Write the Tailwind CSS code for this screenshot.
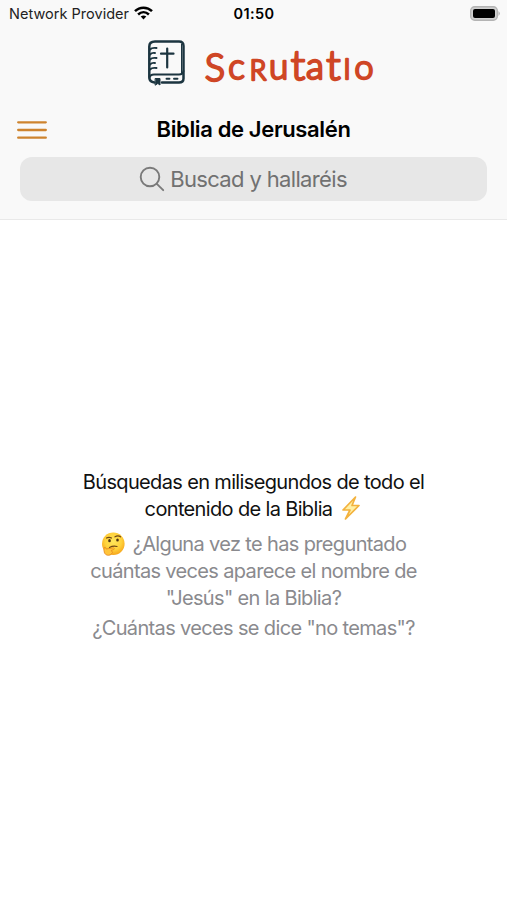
<!DOCTYPE html>
<html lang="es">
<head>
<meta charset="utf-8">
<title>Scrutatio</title>
<script src="https://cdn.jsdelivr.net/npm/@tailwindcss/browser@4"></script>
</head>
<body class="bg-white">
<div class="w-[507px] h-[900px] flex flex-col overflow-hidden bg-white font-['Inter','Liberation_Sans',sans-serif] text-black">
  <header class="h-[220px] shrink-0 bg-[#f9f9f9] border-b border-[#e9e9e9] flex flex-col">
    <div class="h-7 grid grid-cols-3 items-center pl-[9px] pr-[7px] text-[14.5px] leading-7">
      <div class="flex items-center gap-[5px] text-[#222]">
        <span class="whitespace-nowrap tracking-[0.02px]">Network Provider</span>
        <svg class="shrink-0 -mt-[2px]" width="19" height="14" viewBox="0 0 19 14" fill="none" stroke="#000" stroke-width="2.5"><path d="M1 5.2C5.7.6 13.300.6 18 5.200"/><path d="M4.100 8.500C7.300 5.500 11.700 5.500 14.900 8.500"/><path d="M6.700 10.600Q9.500 8.400 12.300 10.600L9.500 13.500Z" fill="#000" stroke="none"/></svg>
      </div>
      <div class="text-center font-semibold tracking-[0.4px] -ml-[1px]">01:50</div>
      <svg class="justify-self-end -mt-[2px]" width="30" height="15" viewBox="0 0 30 15"><rect x=".7" y=".7" width="26.600" height="13.600" rx="4" fill="#d0d0d0" stroke="#b4b4b4" stroke-width="1.400"/><rect x="3" y="3" width="22" height="9" rx="2" fill="#000"/><path d="M28.500 5Q31 7.500 28.500 10Z" fill="#aaa"/></svg>
    </div>
    <div class="h-[76px] flex items-start pl-[147px] pt-3">
      <svg width="39" height="46" viewBox="0 0 39 46" fill="none" stroke="#1c3540" stroke-width="2.500" stroke-linecap="round" stroke-linejoin="round"><path d="M8 1.500H32Q36.500 1.500 36.500 6V38.500Q36.500 42.500 32 42.500H15M7.500 42.500Q2.300 42 2.300 37V6.500Q2.300 1.500 8 1.500"/><path d="M2.300 38Q3 34.500 7 34.500H32Q36 34.500 36.500 31" stroke-width="1.800"/><path d="M34.500 4V33" stroke-width="1"/><path d="M3 9.500Q5 7.300 9.500 8M3 14.500Q5 12.300 8 13M3 19.500Q5 17.300 9.500 18M3 24.500Q5 22.300 8 23M3 29.500Q5 27.300 9.500 28" stroke-width="1.900"/><path d="M20.200 8.500V27.500M14 13.700H26.500" stroke-width="2.200"/><path d="M19.500 38.700H22.500M27 38.700H30.500" stroke-width="1.900"/><path d="M8.500 38.500H13V45L10.800 43.500L8.500 45Z" fill="#1c3540" stroke-width="1"/></svg>
      <svg class="ml-[14px]" width="180" height="50" viewBox="200 40 180 50" fill="#cf4625" stroke="#cf4625" stroke-width="2.400" stroke-linejoin="round" stroke-linecap="round" font-family="Lato, sans-serif" text-anchor="middle">
        <text font-weight="300" font-size="35"><tspan x="215" y="81" font-size="38">S</tspan><tspan x="236.500" y="78.500" font-size="35">c</tspan><tspan x="258" y="79.500" font-size="27">R</tspan><tspan x="278.500" y="78.500" font-size="35">u</tspan><tspan x="298" y="79.500" font-size="42">t</tspan><tspan x="315" y="79" font-size="37">a</tspan><tspan x="333.500" y="79.500" font-size="42">t</tspan><tspan x="347" y="78.500" font-size="27">I</tspan><tspan x="364" y="78.500" font-size="34">o</tspan></text>
      </svg>
    </div>
    <div class="h-[53px] grid grid-cols-[1fr_auto_1fr] items-center px-[17px] pb-[2px]">
      <svg width="30" height="20" viewBox="0 0 30 20" stroke="#ce842f" stroke-width="2.300" stroke-linecap="round"><path d="M1.200 2.300H28.800M1.200 10H28.800M1.200 17.700H28.800"/></svg>
      <h1 class="text-[22px] font-semibold tracking-[-0.36px] whitespace-nowrap">Biblia de Jerusalén</h1>
    </div>
    <div class="mx-5 h-11 rounded-xl bg-[#e7e7e7] flex items-center justify-center gap-[5px] pr-[21px] text-[#717171]">
      <svg width="26" height="26" viewBox="0 0 26 26" fill="none" stroke="#7a7a7a" stroke-width="1.900" stroke-linecap="round"><circle cx="11" cy="11" r="9.300"/><path d="M17.800 17.800L24.200 24.200"/></svg>
      <span class="text-[22px] tracking-[-0.65px] whitespace-nowrap">Buscad y hallaréis</span>
    </div>
  </header>
  <main class="flex-1 flex flex-col items-center pt-[249px] text-center text-[20px] leading-[27px] tracking-[-0.65px] whitespace-nowrap">
    <p class="text-[#111]">Búsquedas en milisegundos de todo el<br>contenido de la Biblia <svg class="inline-block align-[-4px] ml-[3px]" width="22" height="24" viewBox="0 0 22 24"><path d="M15.500 1L3 14H10L5.500 23L19 9.500H12Z" fill="#fff0a5" stroke="#f3b23e" stroke-width="1.700" stroke-linejoin="round"/></svg></p>
    <div class="mt-2 text-[#8a8a8e]">
      <p><svg class="inline-block align-[-5px] mr-[3px]" width="24" height="24" viewBox="0 0 24 24"><defs><radialGradient id="face" cx=".5" cy=".4" r=".6"><stop offset="0" stop-color="#ffe65c"/><stop offset=".6" stop-color="#ffd23b"/><stop offset="1" stop-color="#f6a51c"/></radialGradient></defs><circle cx="12.300" cy="11.700" r="11.300" fill="url(#face)"/><path d="M5.500 6Q8 4.800 10.500 6M14 4.800Q17 2.800 19.500 4.800M8.500 15.500Q12 13.500 16 14.500" fill="none" stroke="#704715" stroke-width="1.200" stroke-linecap="round"/><ellipse cx="8.500" cy="8.700" rx="1.300" ry="1.600" fill="#4c3112"/><ellipse cx="16.500" cy="8" rx="1.300" ry="1.600" fill="#4c3112"/><path d="M3.200 15.500Q4.700 14.700 5.200 17L12.500 15.800Q14.500 16.600 12.500 17.700L10.300 18.300Q12.800 20.500 9.800 22.700Q5.500 24.500 3.500 21Q2.500 18.500 3.200 15.500Z" fill="#ffc43a" stroke="#e4851d" stroke-width=".8"/></svg> ¿Alguna vez te has preguntado<br>cuántas veces aparece el nombre de<br>"Jesús" en la Biblia?</p>
      <p class="mt-[3px]">¿Cuántas veces se dice "no temas"?</p>
    </div>
  </main>
</div>
</body>
</html>
